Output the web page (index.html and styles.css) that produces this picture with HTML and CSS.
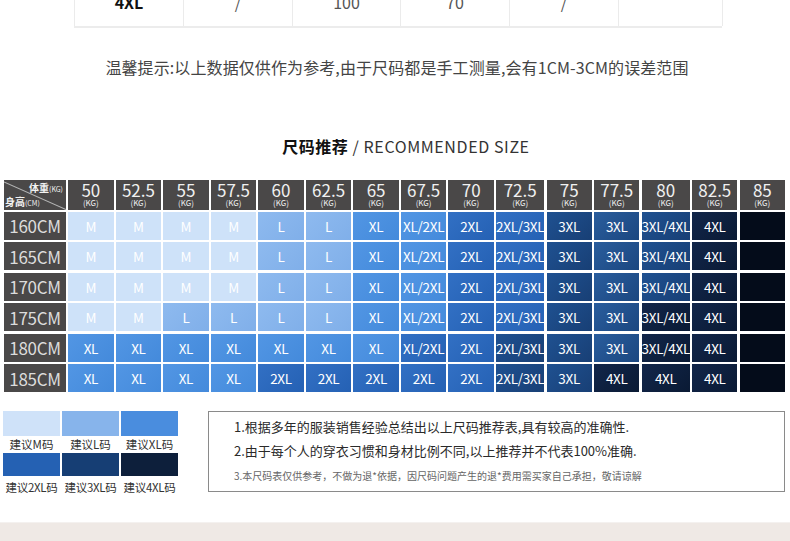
FILE: index.html
```html
<!DOCTYPE html>
<html lang="zh">
<head>
<meta charset="utf-8">
<title>尺码推荐</title>
<link rel="stylesheet" href="styles.css">
</head>
<body>
<div class="page">
  <div class="top-table">
    <div class="tt-cell tt-bold">4XL</div>
    <div class="tt-cell">/</div>
    <div class="tt-cell">100</div>
    <div class="tt-cell">70</div>
    <div class="tt-cell">/</div>
    <div class="tt-cell tt-last"></div>
  </div>

  <p class="hint">温馨提示:以上数据仅供作为参考,由于尺码都是手工测量,会有1CM-3CM的误差范围</p>

  <h2 class="title"><b>尺码推荐</b> / RECOMMENDED SIZE</h2>

  <div class="chart">
    <div class="diag">
      <svg class="diag-line" viewBox="0 0 62 29" preserveAspectRatio="none"><line x1="0" y1="2" x2="62" y2="29" stroke="#b5b5b5" stroke-width="1"/></svg>
      <span class="diag-top">体重<small>(KG)</small></span>
      <span class="diag-bot">身高<small>(CM)</small></span>
    </div>
    <div class="wh"><span>50</span><small>(KG)</small></div>
    <div class="wh"><span>52.5</span><small>(KG)</small></div>
    <div class="wh"><span>55</span><small>(KG)</small></div>
    <div class="wh"><span>57.5</span><small>(KG)</small></div>
    <div class="wh"><span>60</span><small>(KG)</small></div>
    <div class="wh"><span>62.5</span><small>(KG)</small></div>
    <div class="wh"><span>65</span><small>(KG)</small></div>
    <div class="wh"><span>67.5</span><small>(KG)</small></div>
    <div class="wh"><span>70</span><small>(KG)</small></div>
    <div class="wh"><span>72.5</span><small>(KG)</small></div>
    <div class="wh"><span>75</span><small>(KG)</small></div>
    <div class="wh"><span>77.5</span><small>(KG)</small></div>
    <div class="wh"><span>80</span><small>(KG)</small></div>
    <div class="wh"><span>82.5</span><small>(KG)</small></div>
    <div class="wh"><span>85</span><small>(KG)</small></div>

    <div class="hh">160CM</div>
    <div class="c m">M</div><div class="c m">M</div><div class="c m">M</div><div class="c m">M</div>
    <div class="c l">L</div><div class="c l">L</div><div class="c xl">XL</div><div class="c xl">XL/2XL</div>
    <div class="c x2">2XL</div><div class="c x2">2XL/3XL</div><div class="c x3">3XL</div><div class="c x3b">3XL</div>
    <div class="c x3">3XL/4XL</div><div class="c x4">4XL</div><div class="c x5"></div>

    <div class="hh">165CM</div>
    <div class="c m">M</div><div class="c m">M</div><div class="c m">M</div><div class="c m">M</div>
    <div class="c l">L</div><div class="c l">L</div><div class="c xl">XL</div><div class="c xl">XL/2XL</div>
    <div class="c x2">2XL</div><div class="c x2">2XL/3XL</div><div class="c x3">3XL</div><div class="c x3b">3XL</div>
    <div class="c x3">3XL/4XL</div><div class="c x4">4XL</div><div class="c x5"></div>

    <div class="hh">170CM</div>
    <div class="c m">M</div><div class="c m">M</div><div class="c m">M</div><div class="c m">M</div>
    <div class="c l">L</div><div class="c l">L</div><div class="c xl">XL</div><div class="c xl">XL/2XL</div>
    <div class="c x2">2XL</div><div class="c x2">2XL/3XL</div><div class="c x3">3XL</div><div class="c x3b">3XL</div>
    <div class="c x3">3XL/4XL</div><div class="c x4">4XL</div><div class="c x5"></div>

    <div class="hh">175CM</div>
    <div class="c m">M</div><div class="c m">M</div><div class="c l">L</div><div class="c l">L</div>
    <div class="c l">L</div><div class="c l">L</div><div class="c xl">XL</div><div class="c xl">XL/2XL</div>
    <div class="c x2">2XL</div><div class="c x2">2XL/3XL</div><div class="c x3">3XL</div><div class="c x3b">3XL</div>
    <div class="c x4">3XL/4XL</div><div class="c x4">4XL</div><div class="c x5"></div>

    <div class="hh">180CM</div>
    <div class="c xl">XL</div><div class="c xl">XL</div><div class="c xl">XL</div><div class="c xl">XL</div>
    <div class="c xl">XL</div><div class="c xl">XL</div><div class="c xl">XL</div><div class="c x2">XL/2XL</div>
    <div class="c x2">2XL</div><div class="c x3">2XL/3XL</div><div class="c x3">3XL</div><div class="c x3b">3XL</div>
    <div class="c x4">3XL/4XL</div><div class="c x4">4XL</div><div class="c x5"></div>

    <div class="hh">185CM</div>
    <div class="c xl">XL</div><div class="c xl">XL</div><div class="c xl">XL</div><div class="c xl">XL</div>
    <div class="c x2">2XL</div><div class="c x2">2XL</div><div class="c x2">2XL</div><div class="c x2">2XL</div>
    <div class="c x2">2XL</div><div class="c x3">2XL/3XL</div><div class="c x3">3XL</div><div class="c x4">4XL</div>
    <div class="c x4">4XL</div><div class="c x4">4XL</div><div class="c x5"></div>
  </div>

  <div class="bottom">
    <div class="legend">
      <div class="sw sw-m"></div><div class="sw sw-l"></div><div class="sw sw-xl"></div>
      <div class="lg">建议M码</div><div class="lg">建议L码</div><div class="lg">建议XL码</div>
      <div class="sw sw2 sw-x2"></div><div class="sw sw2 sw-x3"></div><div class="sw sw2 sw-x4"></div>
      <div class="lg lg2">建议2XL码</div><div class="lg lg2">建议3XL码</div><div class="lg lg2">建议4XL码</div>
    </div>
    <div class="notes">
      <p class="n1">1.根据多年的服装销售经验总结出以上尺码推荐表,具有较高的准确性.</p>
      <p class="n1">2.由于每个人的穿衣习惯和身材比例不同,以上推荐并不代表100%准确.</p>
      <p class="n3">3.本尺码表仅供参考，不做为退*依据，因尺码问题产生的退*费用需买家自己承担，敬请谅解</p>
    </div>
  </div>

  <div class="band"></div>
</div>
</body>
</html>
```

FILE: styles.css
```css
* { box-sizing: border-box; }
html, body { margin: 0; padding: 0; background: #fff; }
body {
  font-family: "Noto Sans CJK SC", "Noto Sans", sans-serif;
  color: #333;
  width: 790px;
  height: 541px;
  overflow: hidden;
}
.page { display: flex; flex-direction: column; }

/* partial table at top */
.top-table {
  margin-top: -22px;
  margin-left: 74px;
  width: 648px;
  height: 50px;
  display: grid;
  grid-template-columns: 109px 109px 108px 109px 109px 104px;
  border-left: 1px solid #ebebeb;
  border-bottom: 2px solid #ececec;
}
.tt-cell {
  border-right: 1px solid #ebebeb;
  display: flex;
  align-items: center;
  justify-content: center;
  font-size: 16px;
  color: #555;
  line-height: 1;
}
.tt-bold { font-weight: 700; color: #111; }

.hint {
  margin: 28px 0 0;
  height: 22px;
  line-height: 22px;
  font-size: 16px;
  text-align: center;
  color: #444;
  letter-spacing: 0.1px;
  padding-left: 4px;
}

.title {
  margin: 57px 0 0;
  height: 22px;
  line-height: 22px;
  font-size: 16px;
  font-weight: 400;
  text-align: center;
  color: #333;
  letter-spacing: 0.6px;
  padding-left: 22px;
}
.title b { font-weight: 700; color: #111; letter-spacing: 0.5px; }

/* size chart */
.chart {
  margin: 23px 0 0 4px;
  width: 781px;
  display: grid;
  grid-template-columns: 62px repeat(15, 1fr);
  grid-template-rows: 29.5px repeat(6, 28.3px);
  column-gap: 2.2px;
  row-gap: 2.2px;
}
.diag {
  position: relative;
  background: #4a4848;
  color: #f2f2f2;
  display: flex;
  flex-direction: column;
  justify-content: space-between;
  padding: 2px 3px 1px 1px;
  font-size: 10px;
  line-height: 12px;
  font-weight: 700;
}
.diag-line { position: absolute; inset: 0; width: 100%; height: 100%; }
.diag-top { align-self: flex-end; position: relative; }
.diag-bot { align-self: flex-start; position: relative; }
.diag small { font-size: 7px; font-weight: 400; }

.wh {
  background: #4a4848;
  color: #f0f0f0;
  display: flex;
  flex-direction: column;
  align-items: center;
  padding-top: 1px;
}
.wh span { font-size: 17px; line-height: 17px; }
.wh small { font-size: 8px; line-height: 10px; display: block; }

.hh {
  background: #4a4848;
  color: #dcdcdc;
  font-size: 17px;
  display: flex;
  align-items: center;
  justify-content: center;
  letter-spacing: -0.3px;
}

.c {
  display: flex;
  align-items: center;
  justify-content: center;
  color: #fff;
  font-size: 13.5px;
  letter-spacing: -0.3px;
  white-space: nowrap;
}
.m  { background: #cee2f9; }
.l  { background: linear-gradient(135deg, #8ebaef, #80afe9); }
.xl { background: linear-gradient(135deg, #5296e4, #448adb); }
.x2 { background: linear-gradient(135deg, #3270c4, #2561b4); }
.x3 { background: linear-gradient(135deg, #1f5191, #183f75); }
.x3b { background: linear-gradient(135deg, #2a5d9d, #1b4780); }
.x4 { background: linear-gradient(135deg, #12264a, #0a1a34); }
.x5 { background: #040c1a; }

/* legend + notes */
.bottom {
  margin-top: 19px;
  display: flex;
  align-items: flex-start;
  gap: 30px;
  padding-left: 3px;
}
.legend {
  width: 175px;
  display: grid;
  grid-template-columns: repeat(3, 57px);
  grid-template-rows: 25px 17px 23px 19px;
  column-gap: 2px;
}
.sw-m { background: #cfe2f9; }
.sw-l { background: #87b4eb; }
.sw-xl { background: #4a8dde; }
.sw-x2 { background: #2561b3; }
.sw-x3 { background: #163e74; }
.sw-x4 { background: #0d1f3b; }
.lg {
  font-size: 11.5px;
  line-height: 14px;
  text-align: center;
  color: #333;
  white-space: nowrap;
  padding-top: 1px;
}
.lg2 { padding-top: 4px; letter-spacing: -0.3px; }

.notes {
  width: 577px;
  height: 81px;
  border: 1px solid #8a8a8a;
  padding: 3px 0 0 25px;
}
.notes p { margin: 0; white-space: nowrap; }
.n1 { font-size: 13px; line-height: 24px; color: #2a2a2a; }
.n3 { font-size: 10px; line-height: 26px; color: #666; }

.band {
  margin-top: 27px;
  height: 22px;
  background: #efe9e5;
  border-top: 1px solid #f4f1ef;
}
```
